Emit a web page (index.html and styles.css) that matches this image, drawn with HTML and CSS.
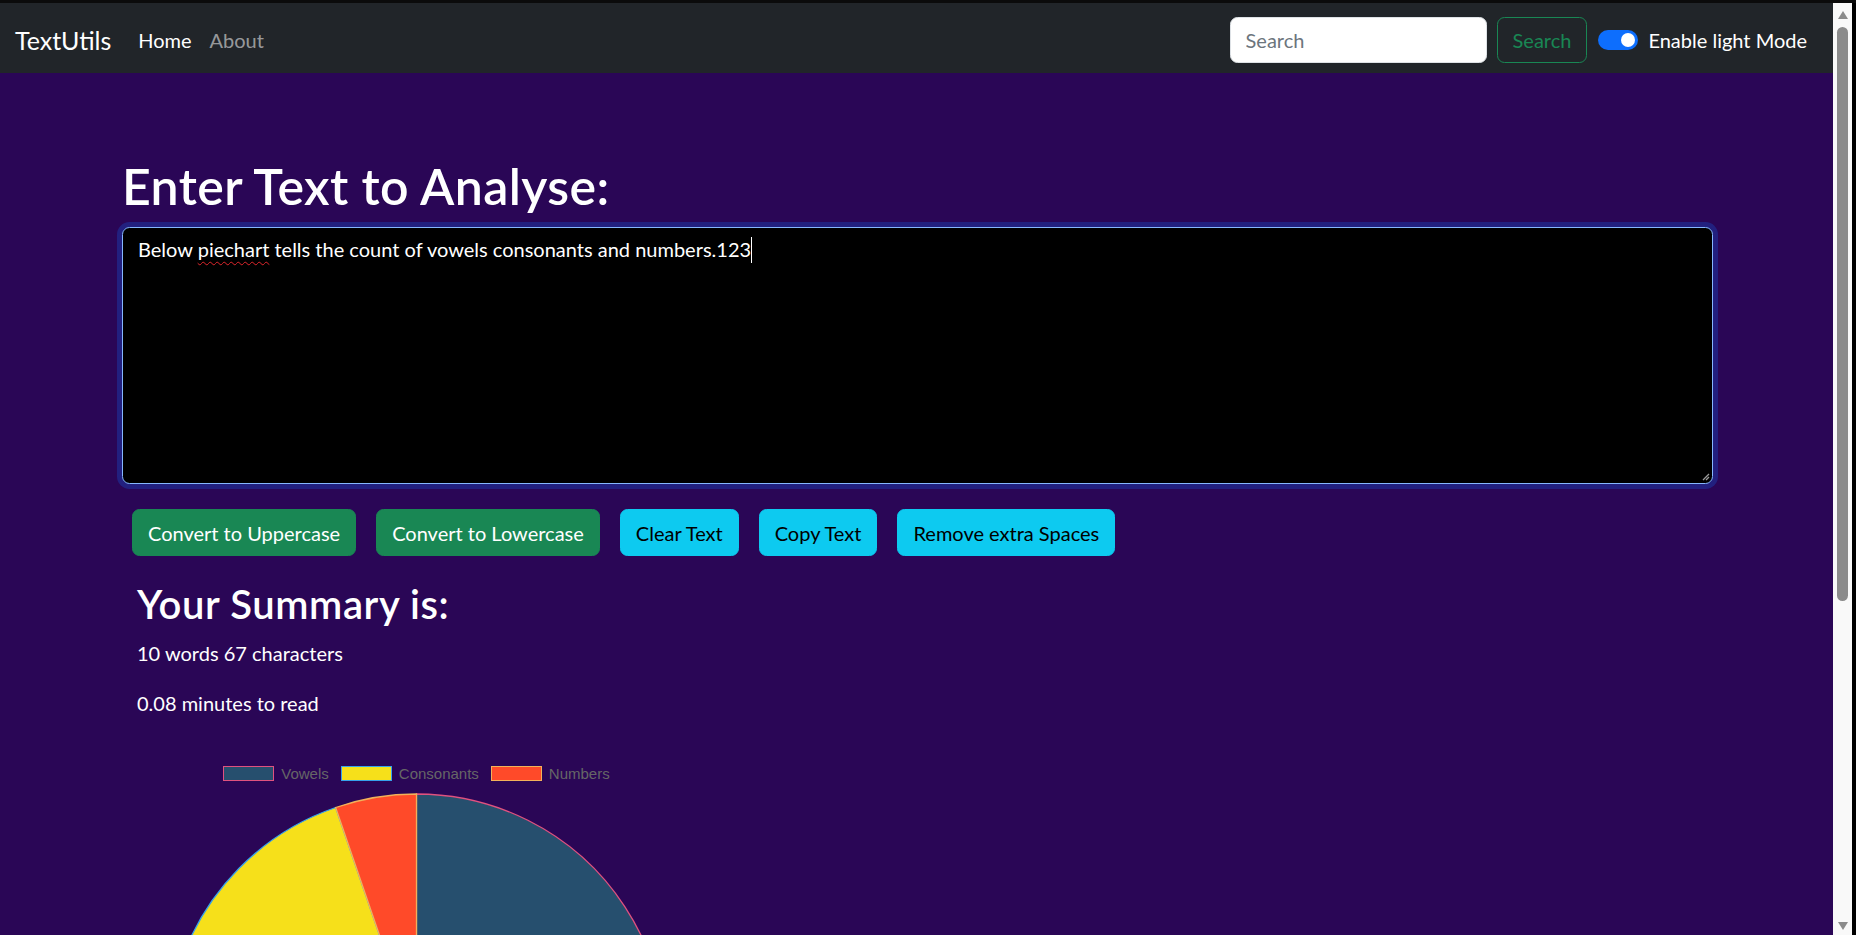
FILE: index.html
```html
<!DOCTYPE html>
<html lang="en">
<head>
<meta charset="utf-8">
<title>TextUtils</title>
<link rel="stylesheet" href="styles.css">
</head>
<body>
<div class="frame">
  <div class="top-edge"></div>
  <div class="window">
    <div class="viewport">
      <nav class="navbar">
        <a class="brand" href="#">TextUtils</a>
        <ul class="nav-links">
          <li class="nav-link active">Home</li>
          <li class="nav-link">About</li>
        </ul>
        <div class="nav-right">
          <form class="search">
            <input class="search-input" type="text" placeholder="Search">
            <button class="btn-outline" type="button">Search</button>
          </form>
          <div class="switch">
            <span class="switch-track"><span class="switch-knob"></span></span>
            <span class="switch-label">Enable light Mode</span>
          </div>
        </div>
      </nav>

      <main class="main">
        <h1 class="title">Enter Text to Analyse:</h1>
        <div class="textbox">Below <span class="misspelt">piechart</span> tells the count of vowels consonants and numbers.123<span class="caret"></span>
          <svg class="grip" width="10" height="10" viewBox="0 0 10 10"><path d="M9 3 L3 9 M9 6 L6 9" stroke="#9a9a9a" stroke-width="1.3" fill="none"/></svg>
        </div>

        <div class="actions">
          <button class="btn btn-success" type="button">Convert to Uppercase</button>
          <button class="btn btn-success" type="button">Convert to Lowercase</button>
          <button class="btn btn-info" type="button">Clear Text</button>
          <button class="btn btn-info" type="button">Copy Text</button>
          <button class="btn btn-info" type="button">Remove extra Spaces</button>
        </div>

        <section class="summary">
          <h2 class="subtitle">Your Summary is:</h2>
          <p class="stat">10 words 67 characters</p>
          <p class="stat">0.08 minutes to read</p>
          <div class="chart">
            <ul class="legend">
              <li class="legend-item"><span class="swatch swatch-vowels"></span>Vowels</li>
              <li class="legend-item"><span class="swatch swatch-consonants"></span>Consonants</li>
              <li class="legend-item"><span class="swatch swatch-numbers"></span>Numbers</li>
            </ul>
            <svg class="pie" width="559" height="520" viewBox="0 0 559 520">
              <path d="M279.5 251 L279.5 2 A249 249 0 0 1 507.5 351 Z" fill="#264f6e" stroke="#e0527f" stroke-width="1.3"/>
              <path d="M279.5 251 L507.5 351 A249 249 0 1 1 198.65 15.5 Z" fill="#f6e01a" stroke="#36a2eb" stroke-width="1.3"/>
              <path d="M279.5 251 L198.65 15.5 A249 249 0 0 1 279.5 2 Z" fill="#ff4a29" stroke="#f2b15a" stroke-width="1.3"/>
            </svg>
          </div>
        </section>
      </main>
    </div>
    <div class="scrollbar">
      <span class="arrow arrow-up"></span>
      <span class="thumb"></span>
      <span class="track-rest"></span>
      <span class="arrow arrow-down"></span>
    </div>
    <div class="right-edge"></div>
  </div>
</div>
</body>
</html>
```

FILE: styles.css
```css
* { box-sizing: border-box; }

html, body {
  margin: 0;
  padding: 0;
  height: 100%;
  overflow: hidden;
}

body {
  font-family: Lato, "Open Sans", "Noto Sans", sans-serif;
  color: #fff;
  background: #000;
}

.frame {
  height: 935px;
  display: flex;
  flex-direction: column;
}

.top-edge {
  height: 3px;
  background: #0b0b0b;
  flex: none;
}

.window {
  flex: 1;
  min-height: 0;
  display: flex;
}

.viewport {
  flex: 1;
  min-width: 0;
  overflow: hidden;
  background: #2a0656;
}

/* ---------- navbar ---------- */
.navbar {
  height: 70px;
  background: #212529;
  display: flex;
  align-items: center;
  padding: 4px 26px 0 15px;
}

.brand {
  font-size: 25px;
  line-height: 37px;
  color: #fff;
  text-decoration: none;
  margin-right: 18px;
}

.nav-links {
  list-style: none;
  display: flex;
  margin: 0;
  padding: 0;
}

.nav-link {
  font-size: 20px;
  line-height: 30px;
  padding: 0 9px;
  color: rgba(255, 255, 255, 0.55);
}

.nav-link.active { color: #fff; }

.nav-right {
  margin-left: auto;
  display: flex;
  align-items: center;
}

.search {
  display: flex;
  align-items: center;
  margin: 0;
}

.search-input {
  width: 257px;
  height: 46px;
  border: 1.25px solid #dee2e6;
  border-radius: 7.5px;
  padding: 0 15px;
  font-family: inherit;
  font-size: 20px;
  color: #212529;
  background: #fff;
  margin-right: 10px;
}

.search-input::placeholder { color: #6c757d; }

.btn-outline {
  height: 46px;
  padding: 0 15px;
  border: 1.25px solid #198754;
  border-radius: 7.5px;
  background: transparent;
  color: #198754;
  font-family: inherit;
  font-size: 20px;
}

.switch {
  display: flex;
  align-items: center;
  margin-left: 11px;
}

.switch-track {
  width: 40px;
  height: 20px;
  border-radius: 10px;
  background: #0d6efd;
  display: flex;
  align-items: center;
  justify-content: flex-end;
  padding-right: 3px;
}

.switch-knob {
  width: 14px;
  height: 14px;
  border-radius: 50%;
  background: #fff;
}

.switch-label {
  margin-left: 10px;
  font-size: 20px;
  line-height: 30px;
  color: #fff;
}

/* ---------- main ---------- */
.main {
  padding: 83px 120px 0 122px;
}

.title {
  margin: 0 0 11px;
  font-size: 50px;
  font-weight: 600;
  line-height: 60px;
  letter-spacing: 0.4px;
}

.textbox {
  position: relative;
  height: 257px;
  border: 1.25px solid #86b7fe;
  border-radius: 7.5px;
  background: #000;
  color: #fff;
  font-size: 20px;
  line-height: 30px;
  padding: 6px 15px;
  box-shadow: 0 0 0 5px rgba(13, 110, 253, 0.25);
}

.misspelt {
  text-decoration: underline wavy #e0262b;
  text-decoration-thickness: 1px;
  text-underline-offset: 4px;
}

.caret {
  display: inline-block;
  width: 1px;
  height: 26px;
  background: #fff;
  vertical-align: -6px;
}

.grip {
  position: absolute;
  right: 2px;
  bottom: 2px;
}

.actions {
  display: flex;
  gap: 20px;
  margin-top: 25px;
  padding-left: 10px;
}

.btn {
  font-family: inherit;
  font-size: 20px;
  line-height: 30px;
  padding: 7.5px 15px;
  border: 1.25px solid transparent;
  border-radius: 7.5px;
}

.btn-success {
  background: #198754;
  border-color: #198754;
  color: #fff;
}

.btn-info {
  background: #0dcaf0;
  border-color: #0dcaf0;
  color: #000;
}

.summary {
  margin-top: 24px;
  padding-left: 15px;
}

.subtitle {
  margin: 0 0 10px;
  font-size: 40px;
  font-weight: 600;
  line-height: 48px;
  letter-spacing: 0.6px;
}

.stat {
  margin: 0 0 20px;
  font-size: 20px;
  line-height: 30px;
}

.chart {
  width: 559px;
  padding-top: 28px;
}

.legend {
  list-style: none;
  margin: 0;
  padding: 0;
  height: 15px;
  display: flex;
  justify-content: center;
  gap: 12px;
}

.legend-item {
  display: flex;
  align-items: center;
  font-family: "Liberation Sans", Arial, sans-serif;
  font-size: 15px;
  line-height: 15px;
  color: #666;
}

.swatch {
  width: 51px;
  height: 15px;
  margin-right: 7px;
  border: 1.3px solid;
}

.swatch-vowels { background: #264f6e; border-color: #e0527f; }
.swatch-consonants { background: #f6e01a; border-color: #36a2eb; }
.swatch-numbers { background: #ff4a29; border-color: #f2b15a; }

.pie {
  display: block;
  margin-top: 11px;
}

/* ---------- scrollbar ---------- */
.scrollbar {
  width: 19px;
  flex: none;
  background: #f9f9f9;
  display: flex;
  flex-direction: column;
  align-items: center;
}

.arrow {
  width: 0;
  height: 0;
  border-left: 5.5px solid transparent;
  border-right: 5.5px solid transparent;
}

.arrow-up {
  margin-top: 8px;
  border-bottom: 8px solid #8b8b8b;
}

.arrow-down {
  margin-bottom: 5px;
  border-top: 8px solid #8b8b8b;
}

.thumb {
  width: 11px;
  height: 574px;
  margin-top: 8px;
  border-radius: 6px;
  background: #8b8b8b;
}

.track-rest { flex: 1; }

.right-edge {
  width: 4px;
  flex: none;
  background: #000;
}
```
